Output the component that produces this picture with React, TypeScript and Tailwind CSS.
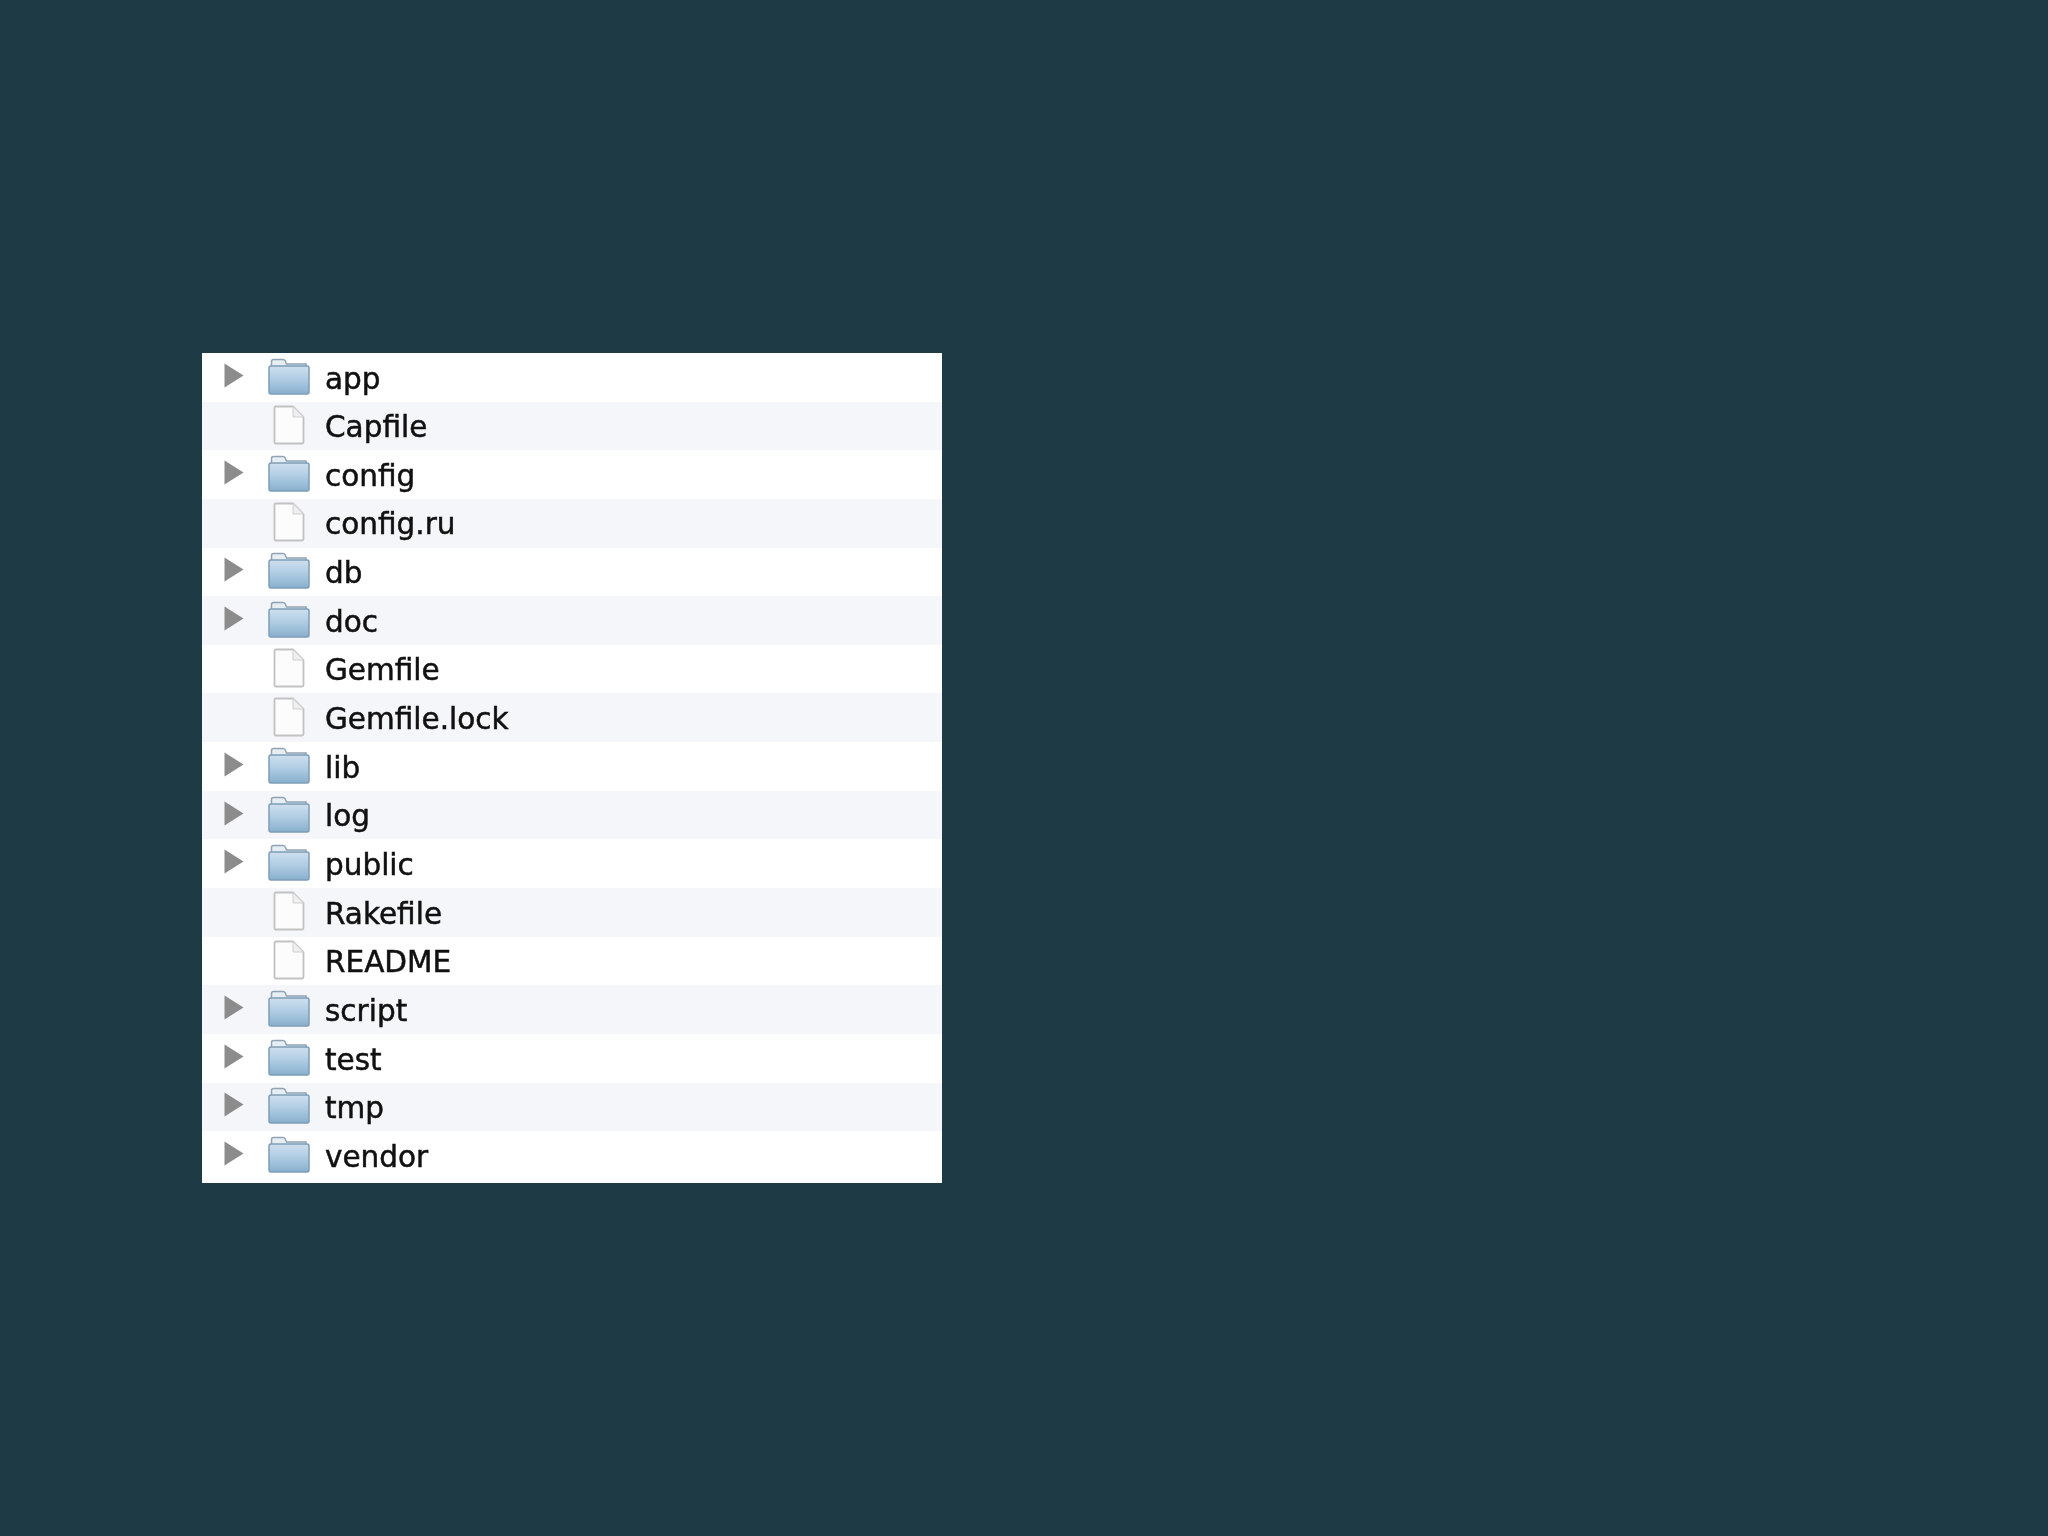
import React from "react";

const items: { name: string; dir: boolean }[] = [
  { name: "app", dir: true },
  { name: "Capfile", dir: false },
  { name: "config", dir: true },
  { name: "config.ru", dir: false },
  { name: "db", dir: true },
  { name: "doc", dir: true },
  { name: "Gemfile", dir: false },
  { name: "Gemfile.lock", dir: false },
  { name: "lib", dir: true },
  { name: "log", dir: true },
  { name: "public", dir: true },
  { name: "Rakefile", dir: false },
  { name: "README", dir: false },
  { name: "script", dir: true },
  { name: "test", dir: true },
  { name: "tmp", dir: true },
  { name: "vendor", dir: true },
];

const Arrow = () => (
  <svg width="20" height="25" viewBox="0 0 20 25" className="block">
    <path d="M0.5 0.5 L19.5 12.5 L0.5 24.5 Z" fill="#8c8c8c" />
  </svg>
);

const Folder = () => (
  <svg width="42" height="37" viewBox="0 0 42 37" className="block">
    <defs>
      <linearGradient id="folderBody" x1="0" y1="0" x2="0" y2="1">
        <stop offset="0" stopColor="#cfe0ee" />
        <stop offset="0.5" stopColor="#aecbe2" />
        <stop offset="1" stopColor="#88afcd" />
      </linearGradient>
    </defs>
    {/* tab and back edge */}
    <path d="M3.5 9 V3.5 Q3.5 1.5 5.5 1.5 H15 Q17 1.5 17.5 3.5 L18.5 6 H38 V9 Z" fill="#e6edf3" stroke="#8fa3b4" strokeWidth="1.5" />
    <path
      d="M1 10 Q1 8 3 8 H39 Q41 8 41 10 V34 Q41 36 39 36 H3 Q1 36 1 34 Z"
      fill="url(#folderBody)"
      stroke="#7e9db6"
      strokeWidth="1.5"
    />
  </svg>
);

const FileIcon = () => (
  <svg width="32" height="40" viewBox="0 0 32 40" className="block">
    <path
      d="M3 1.5 H20 L30.5 12 V37 Q30.5 38.5 29 38.5 H3 Q1.5 38.5 1.5 37 V3 Q1.5 1.5 3 1.5 Z"
      fill="#fcfcfc"
      stroke="#c2c2c2"
      strokeWidth="1.8"
    />
    <path d="M20 1.5 V12 H30.5 Z" fill="#efefef" stroke="#cfcfcf" strokeWidth="1" />
  </svg>
);

export default function App() {
  return (
    <div className="min-h-screen bg-[#1e3a44] pt-[353px] pl-[202px]">
      <div className="w-[740px] bg-white pb-[3px] font-['DejaVu_Sans',sans-serif] text-[29.5px] text-[#111111]">
        {items.map((item, i) => (
          <div
            key={item.name}
            className={`flex h-[48.65px] items-center ${i % 2 === 1 ? "bg-[#f5f6fa]" : "bg-white"}`}
          >
            <div className="ml-[22px] flex w-[44px] -translate-y-[2px] items-center blur-[0.5px]">
              {item.dir && <Arrow />}
            </div>
            <div className="flex w-[42px] -translate-y-[1px] justify-center blur-[0.6px]">
              {item.dir ? <Folder /> : <FileIcon />}
            </div>
            <span className="ml-[15px] translate-y-[2px] leading-none blur-[0.5px] [-webkit-text-stroke:0.5px_#111111]">
              {item.name}
            </span>
          </div>
        ))}
      </div>
    </div>
  );
}
